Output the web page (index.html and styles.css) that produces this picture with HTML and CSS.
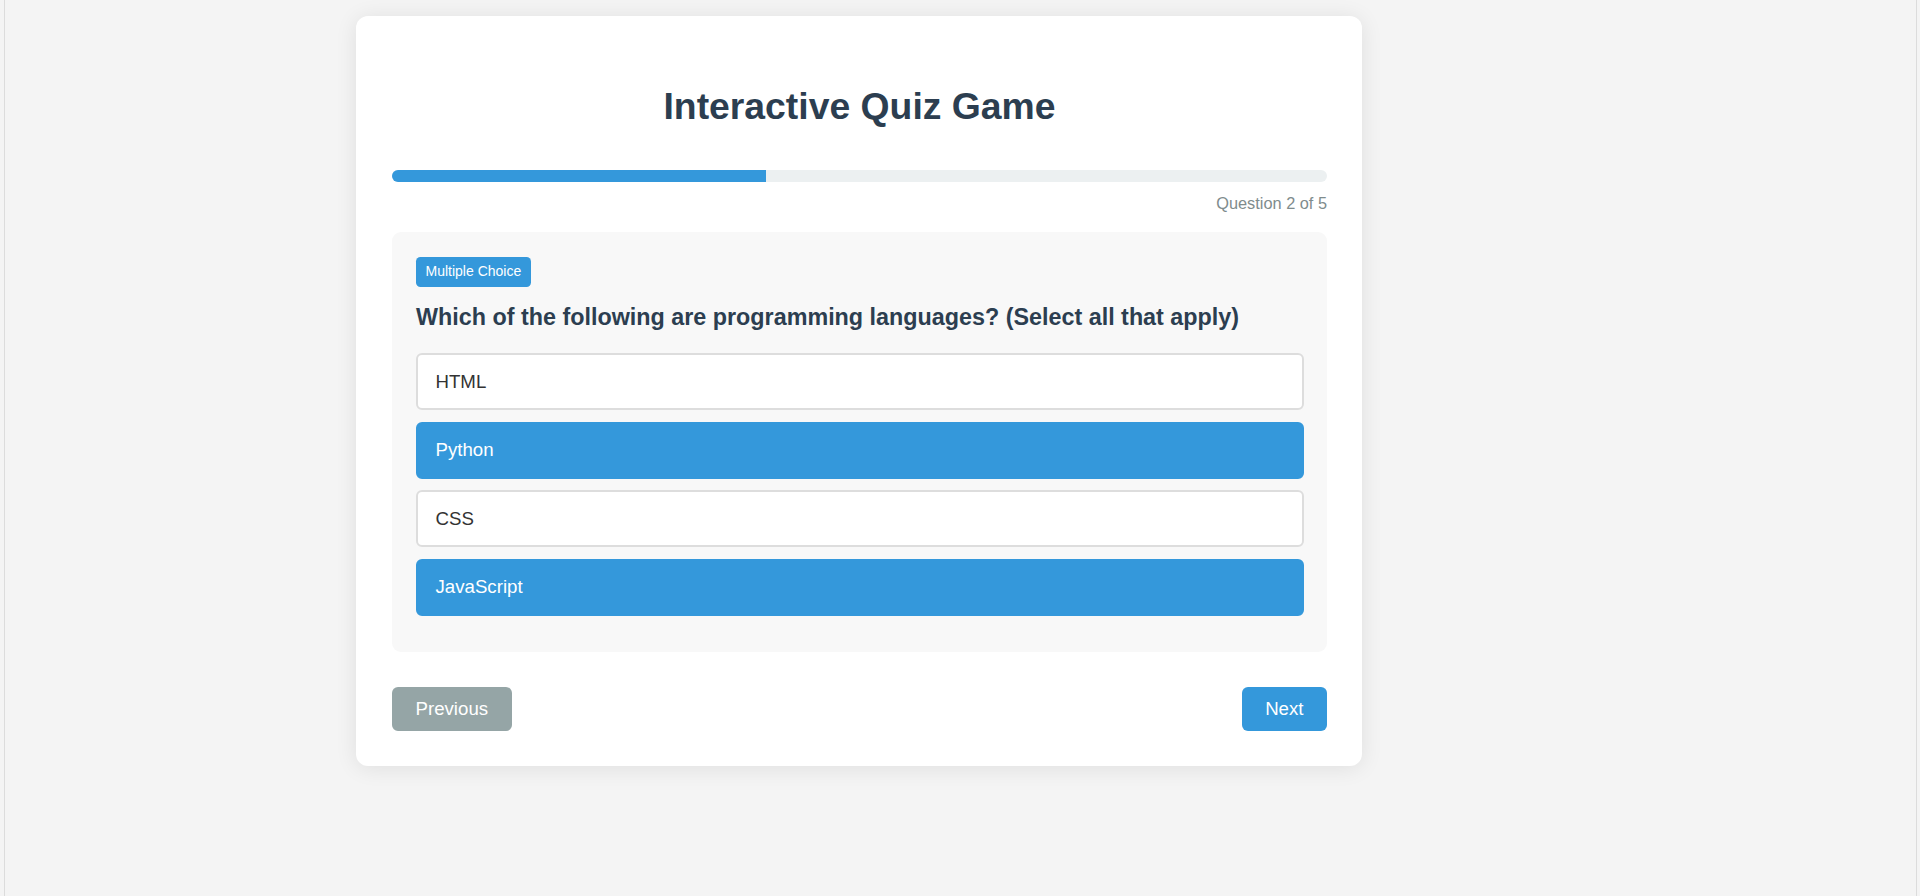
FILE: index.html
```html
<!DOCTYPE html>
<html lang="en">
<head>
<meta charset="utf-8">
<title>Interactive Quiz Game</title>
<link rel="stylesheet" href="styles.css">
</head>
<body>
<div class="frame">
  <div class="card">
    <h1 class="title">Interactive Quiz Game</h1>
    <div class="progress">
      <div class="progress-fill" style="width: 40%"></div>
    </div>
    <div class="progress-text">Question 2 of 5</div>
    <div class="question-box">
      <span class="badge">Multiple Choice</span>
      <h2 class="question">Which of the following are programming languages? (Select all that apply)</h2>
      <div class="options">
        <div class="option">HTML</div>
        <div class="option selected">Python</div>
        <div class="option">CSS</div>
        <div class="option selected">JavaScript</div>
      </div>
    </div>
    <div class="nav">
      <button class="btn btn-prev">Previous</button>
      <button class="btn btn-next">Next</button>
    </div>
  </div>
</div>
</body>
</html>
```
FILE: styles.css
```css
* { box-sizing: border-box; }
html, body {
  margin: 0;
  padding: 0;
  background: #f4f4f4;
  font-family: "Liberation Sans", Arial, sans-serif;
}
.frame {
  margin-left: 4px;
  width: 1913px;
  min-height: 896px;
  border-left: 1px solid #dcdcdc;
  border-right: 1px solid #dcdcdc;
  padding: 16px 0 0 351px;
}
.card {
  width: 1006px;
  background: #fff;
  border-radius: 12px;
  box-shadow: 0 2px 22px rgba(0, 0, 0, 0.09);
  padding: 35px 35px 35px 36px;
}
.title {
  margin: 34px 0 42px;
  font-size: 37.33px;
  line-height: 43px;
  font-weight: bold;
  text-align: center;
  color: #2c3e50;
}
.progress {
  height: 12px;
  background: #ecf0f1;
  border-radius: 6px;
  overflow: hidden;
}
.progress-fill {
  height: 100%;
  background: #3498db;
}
.progress-text {
  margin-top: 12px;
  text-align: right;
  font-size: 16.33px;
  line-height: 19px;
  color: #7f8c8d;
}
.question-box {
  margin-top: 18.5px;
  background: #f8f8f8;
  border-radius: 9px;
  padding: 23.5px 23.5px 36.5px 24px;
}
.badge {
  display: inline-block;
  background: #3498db;
  color: #fff;
  font-size: 14px;
  line-height: 17px;
  padding: 6.5px 9.5px;
  border-radius: 4.5px;
  margin-top: 1.5px;
}
.question {
  margin: 17.5px 0 22px;
  font-size: 23.33px;
  line-height: 27px;
  font-weight: bold;
  color: #2c3e50;
}
.options {
  display: flex;
  flex-direction: column;
  gap: 11.67px;
}
.option {
  height: 57px;
  display: flex;
  align-items: center;
  padding: 0 17.5px;
  border: 2px solid #dddddd;
  border-radius: 6px;
  background: #fff;
  font-size: 18.67px;
  color: #333;
}
.option.selected {
  background: #3498db;
  border-color: #3498db;
  color: #fff;
}
.nav {
  margin-top: 34.5px;
  display: flex;
  justify-content: space-between;
}
.btn {
  border: none;
  border-radius: 6px;
  color: #fff;
  font-family: "Liberation Sans", Arial, sans-serif;
  font-size: 18.67px;
  line-height: 21.5px;
  padding: 11.5px 23.5px;
}
.btn-prev { background: #95a5a6; }
.btn-next { background: #3498db; }
```
